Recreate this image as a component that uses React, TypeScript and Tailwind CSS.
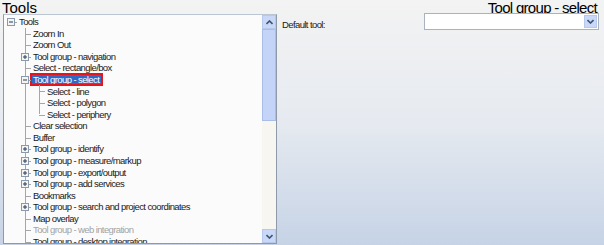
import React from "react";

type Node = {
  label: string;
  level: number;
  exp?: "plus" | "minus";
  last?: boolean;
  selected?: boolean;
  disabled?: boolean;
};

const rows: Node[] = [
  { label: "Tools", level: 0, exp: "minus" },
  { label: "Zoom In", level: 1 },
  { label: "Zoom Out", level: 1 },
  { label: "Tool group - navigation", level: 1, exp: "plus" },
  { label: "Select - rectangle/box", level: 1 },
  { label: "Tool group - select", level: 1, exp: "minus", selected: true },
  { label: "Select - line", level: 2 },
  { label: "Select - polygon", level: 2 },
  { label: "Select - periphery", level: 2, last: true },
  { label: "Clear selection", level: 1 },
  { label: "Buffer", level: 1 },
  { label: "Tool group - identify", level: 1, exp: "plus" },
  { label: "Tool group - measure/markup", level: 1, exp: "plus" },
  { label: "Tool group - export/output", level: 1, exp: "plus" },
  { label: "Tool group - add services", level: 1, exp: "plus" },
  { label: "Bookmarks", level: 1 },
  { label: "Tool group - search and project coordinates", level: 1, exp: "plus" },
  { label: "Map overlay", level: 1 },
  { label: "Tool group - web integration", level: 1, disabled: true },
  { label: "Tool group - desktop integration", level: 1 },
];

function Expander({ kind }: { kind: "plus" | "minus" }) {
  return (
    <svg width="8" height="8" viewBox="0 0 8 8" className="absolute left-[3px] top-[2px]">
      <rect x="0.5" y="0.5" width="7" height="7" fill="#f4f4f0" stroke="#8a9aae" />
      <line x1="2" y1="4" x2="6" y2="4" stroke="#2a3a5a" />
      {kind === "plus" && <line x1="4" y1="2" x2="4" y2="6" stroke="#2a3a5a" />}
    </svg>
  );
}

function Column({ own, node, through }: { own: boolean; node?: Node; through?: boolean }) {
  return (
    <span className="relative w-[14px] h-full shrink-0">
      {through && <span className="absolute left-[7px] top-0 h-full w-px bg-[#a6a6a6]" />}
      {own && node && (
        <>
          {node.level > 0 && (
            <span
              className={`absolute left-[7px] top-0 w-px bg-[#a6a6a6] ${node.last ? "h-1/2" : "h-full"}`}
            />
          )}
          <span className="absolute left-[7px] top-[6px] h-px w-[6px] bg-[#a6a6a6]" />
          {node.exp && <Expander kind={node.exp} />}
        </>
      )}
    </span>
  );
}

function Row({ node }: { node: Node }) {
  const cols = [];
  for (let c = 0; c < node.level; c++) {
    cols.push(<Column key={c} own={false} through={c === 1} />);
  }
  cols.push(<Column key="own" own node={node} />);
  return (
    <div className="flex h-[11.58px] items-stretch">
      {cols}
      <span
        className={`ml-[-1px] flex items-center whitespace-nowrap px-[2px] leading-none ${
          node.selected
            ? "bg-[#316ac5] pr-[3px] text-white outline outline-2 outline-[#e8141c] -outline-offset-1"
            : node.disabled
            ? "text-[#a3a3a3]"
            : "text-[#1a1a1a]"
        }`}
      >
        {node.label}
      </span>
    </div>
  );
}

function Arrow({ up }: { up?: boolean }) {
  return (
    <svg width="7" height="5" viewBox="0 0 7 5">
      <path
        d={up ? "M0.5 4 L3.5 1 L6.5 4" : "M0.5 1 L3.5 4 L6.5 1"}
        fill="none"
        stroke="#3e5378"
        strokeWidth="1.6"
      />
    </svg>
  );
}

export default function App() {
  return (
    <div
      className="w-[604px] h-[245px] overflow-hidden bg-gradient-to-b from-[#f3f3f3] via-[#e6eaf0] to-[#c6d3e6] text-[10px]"
      style={{ fontFamily: '"Liberation Sans", Arial, sans-serif' }}
    >
      <div className="flex h-[14px] items-center justify-between px-[2px] text-[15px] leading-none text-black">
        <span>Tools</span>
        <span className="pr-[5px] tracking-[-0.7px]">Tool group - select</span>
      </div>
      <div className="flex">
        <div className="ml-[3px] flex h-[230px] w-[274px] border border-[#8e9aa8] border-t-[#bcc6d2] bg-[#fbfbfb]">
          <div className="flex-1 overflow-hidden pt-px text-[9.5px] tracking-[-0.6px]">
            {rows.map((r) => (
              <Row key={r.label} node={r} />
            ))}
          </div>
          <div className="flex w-[14px] flex-col bg-[#f7f6f1]">
            <div className="flex h-[14px] items-center justify-center border border-[#b6c8ec] bg-[#c9d8f6]">
              <Arrow up />
            </div>
            <div className="h-[92px] border border-[#aabde6] bg-[#c3d4f8]" />
            <div className="flex-1" />
            <div className="flex h-[14px] items-center justify-center border border-[#b6c8ec] bg-[#c9d8f6]">
              <Arrow />
            </div>
          </div>
        </div>
        <div className="flex flex-1 items-start justify-between pl-[5px] pr-[5px] pt-0">
          <span className="mt-[4px] text-[9.5px] tracking-[-0.6px] text-[#1a1a1a]">Default tool:</span>
          <div className="-mt-px flex h-[17px] w-[175px] items-center justify-end border border-[#a9b2bd] bg-white pr-px">
            <div className="flex h-[13px] w-[13px] items-center justify-center border border-[#b6c8ec] bg-[#c9d8f6]">
              <Arrow />
            </div>
          </div>
        </div>
      </div>
    </div>
  );
}
